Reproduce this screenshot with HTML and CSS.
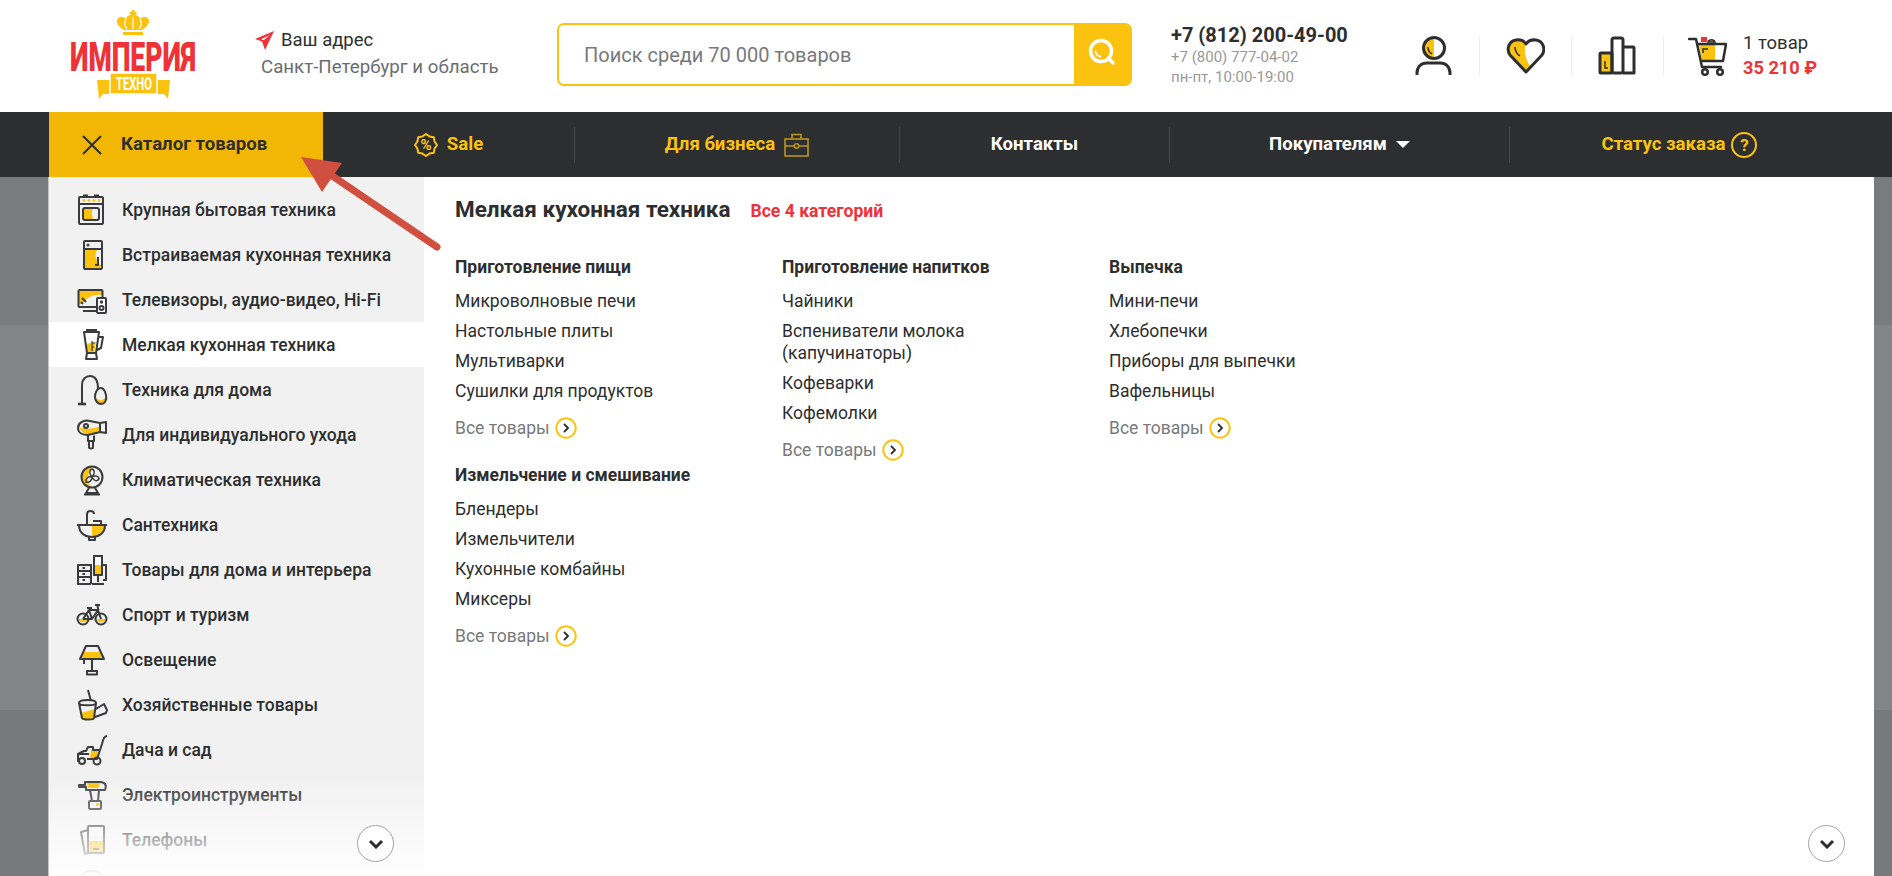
FILE: index.html
```html
<!DOCTYPE html>
<html lang="ru">
<head>
    <meta charset="UTF-8">
    <meta name="viewport" content="width=device-width, initial-scale=1.0">
    <title>Империя Техно</title>
    <link rel="stylesheet" href="styles.css">
</head>
<body>
    <header class="header">
        <a class="logo" href="#">
            <svg width="150" height="112" viewBox="0 0 150 112">
                <rect x="71.5" y="10" width="3" height="8" fill="#fbc210"/>
                <rect x="69.5" y="12" width="7" height="2.5" fill="#fbc210"/>
                <path d="M64 30C55 25 55 17 62 17C64 17 66 19 66 19C67 15 70 15 73 15C76 15 79 15 80 19C80 19 82 17 84 17C91 17 91 25 82 30Z" fill="#fbc210"/>
                <path d="M67 29C64 25 64 22 66 19M73 29V17M79 29C82 25 82 22 80 19" fill="none" stroke="#fff" stroke-width="1.2"/>
                <rect x="63" y="32" width="20" height="3" fill="#fbc210"/>
                <text transform="translate(10 71) scale(.66 1)" class="logo-name" textLength="191" lengthAdjust="spacingAndGlyphs">ИМПЕРИЯ</text>
                <path d="M37 80H50V94H43L39 99Z M110 80H97V94H104L108 99Z" fill="#fbc210"/>
                <rect x="50" y="73" width="47" height="21" fill="#fbc210" stroke="#fff" stroke-width="1.5"/>
                <text transform="translate(56 90) scale(.6 1)" class="logo-sub" textLength="60" lengthAdjust="spacingAndGlyphs">ТЕХНО</text>
            </svg>
        </a>
        <div class="address">
            <div class="address-top">
                <svg width="19" height="19" viewBox="0 0 19 19"><path d="M19 0L0 8L7 10.5L10 19Z M15 4L6 8.2L8.6 9.2Z" fill="#ee3338" fill-rule="evenodd"/></svg>
                <span>Ваш адрес</span>
            </div>
            <div class="address-city">Санкт-Петербург и область</div>
        </div>
        <form class="search">
            <input class="search-input" type="text" placeholder="Поиск среди 70 000 товаров">
            <button class="search-btn" type="button">
                <svg width="30" height="30" viewBox="0 0 30 30" fill="none" stroke="#fff" stroke-width="3.5"><circle cx="14" cy="13" r="10.500"/><path d="M22 21l4 4" stroke-linecap="round"/><path d="M8.500 13c0 3 2.500 5.500 5.500 5.500" stroke-width="1.800"/></svg>
            </button>
        </form>
        <div class="phones">
            <div class="phone-main">+7 (812) 200-49-00</div>
            <div class="phone-sub">+7 (800) 777-04-02</div>
            <div class="phone-sub">пн-пт, 10:00-19:00</div>
        </div>
        <div class="tools">
            <svg class="tool" width="39" height="40" viewBox="0 0 39 40">
                <path d="M20 1.5a10.5 10.5 0 0 0 0 21Z" fill="#fbc210"/>
                <circle cx="20" cy="12" r="10.5" fill="none" stroke="#2d2e30" stroke-width="3"/>
                <path d="M14 11c0 4 2 6 4 7" fill="none" stroke="#2d2e30" stroke-width="1.5"/>
                <path d="M3 39v-2c0-6 4-10 10-10h13c6 0 10 4 10 10v2" fill="none" stroke="#2d2e30" stroke-width="3"/>
            </svg>
            <i class="tool-sep"></i>
            <svg class="tool" width="39" height="40" viewBox="0 0 39 40">
                <path d="M20 8C18 5 14 3.500 10 4C3 5 0 13 4 19L20 36L25 31C20 25 17 15 20 8Z" fill="#fbc210"/>
                <path d="M20 36L4 19C0 13 3 5 10 4C14 3.500 18 5 20 8C22 5 26 3.500 30 4C37 5 40 13 36 19Z" fill="none" stroke="#2d2e30" stroke-width="3" stroke-linejoin="round"/>
                <path d="M9 11c0 4 2 7 5 9" fill="none" stroke="#2d2e30" stroke-width="1.500"/>
            </svg>
            <i class="tool-sep"></i>
            <svg class="tool" width="39" height="40" viewBox="0 0 39 40">
                <rect x="2" y="17" width="12" height="20" fill="#fbc210"/>
                <g fill="none" stroke="#2d2e30" stroke-width="3" stroke-linejoin="round">
                    <rect x="2" y="17" width="12" height="20" rx="1"/>
                    <rect x="14" y="2" width="11" height="35" rx="2"/>
                    <path d="M25 11H35a1 1 0 0 1 1 1V37H25"/>
                </g>
                <path d="M7 25v7h3" fill="none" stroke="#2d2e30" stroke-width="1.500"/>
            </svg>
            <i class="tool-sep"></i>
            <div class="cart">
                <svg class="tool" width="39" height="40" viewBox="0 0 39 40">
                    <rect x="13" y="1" width="6" height="5" fill="#ee3338"/>
                    <path d="M20 6c1-3 6-3 7 0z" fill="#fbc210" stroke="#2d2e30" stroke-width="1.500"/>
                    <path d="M11 8H27V25H14Z" fill="#fbc210"/>
                    <g fill="none" stroke="#2d2e30" stroke-width="2.500" stroke-linejoin="round" stroke-linecap="round">
                        <path d="M1 3H8L14 31H33"/>
                        <path d="M10 8H38L35 25H14"/>
                        <circle cx="17" cy="36" r="2.800"/>
                        <circle cx="32" cy="36" r="2.800"/>
                    </g>
                    <path d="M15 17v-4h5" fill="none" stroke="#2d2e30" stroke-width="1.500"/>
                </svg>
                <div class="cart-text">
                    <div class="cart-count">1 товар</div>
                    <div class="cart-sum">35 210 ₽</div>
                </div>
            </div>
        </div>
    </header>

    <nav class="nav">
        <a class="nav-catalog" href="#">
            <svg width="20" height="20" viewBox="0 0 20 20"><path d="M1 1L19 19M19 1L1 19" stroke="#2d2e30" stroke-width="2"/></svg>
            <span>Каталог товаров</span>
        </a>
        <a class="nav-item nav-sale accent" href="#">
            <svg width="24" height="24" viewBox="0 0 24 24">
                <path d="M12 1L15.560 3.410L19.780 4.220L20.590 8.440L23 12L20.590 15.560L19.780 19.780L15.560 20.590L12 23L8.440 20.590L4.220 19.780L3.410 15.560L1 12L3.410 8.440L4.220 4.220L8.440 3.410Z" fill="none" stroke="#fbc210" stroke-width="2" stroke-linejoin="round"/>
                <text x="12" y="17" class="sale-percent" text-anchor="middle">%</text>
            </svg>
            <span>Sale</span>
        </a>
        <i class="nav-sep"></i>
        <a class="nav-item nav-biz accent" href="#">
            <span>Для бизнеса</span>
            <svg width="25" height="24" viewBox="0 0 25 24" fill="none" stroke="#b8951d" stroke-width="1.600"><rect x="1" y="6" width="23" height="17"/><path d="M8 6V1.500H17V6M1 13H10M15 13H24"/><circle cx="12.500" cy="13" r="2.200"/></svg>
        </a>
        <i class="nav-sep"></i>
        <a class="nav-item nav-contacts" href="#"><span>Контакты</span></a>
        <i class="nav-sep"></i>
        <a class="nav-item nav-buyers" href="#">
            <span>Покупателям</span>
            <i class="caret"></i>
        </a>
        <i class="nav-sep"></i>
        <a class="nav-item nav-status accent" href="#">
            <span>Статус заказа</span>
            <i class="help">?</i>
        </a>
    </nav>

    <div class="stage">
        <aside class="side">
            <ul class="side-list">
                <li class="side-row">
                    <svg class="ic" viewBox="0 0 32 32"><path class="y" d="M7 14H17C15 18 16 23 18 26H7Z"/><rect x="3" y="3" width="24" height="27" rx="1"/><path d="M3 10H27M7 1.500H12M18 1.500H23"/><circle class="y" cx="8" cy="6.500" r="1.400"/><circle class="y" cx="13" cy="6.500" r="1.400"/><circle class="y" cx="18" cy="6.500" r="1.400"/><circle class="y" cx="23" cy="6.500" r="1.400"/><rect x="7" y="14" width="16" height="12" rx="2"/></svg>
                    <span>Крупная бытовая техника</span>
                </li>
                <li class="side-row">
                    <svg class="ic" viewBox="0 0 32 32"><path class="y" d="M8 10H22C18 14 19 22 25 26V30H8Z"/><rect x="8" y="2" width="18" height="28" rx="1"/><path d="M8 10H26M22 18V26H19"/><circle cx="12" cy="6" r=".6"/></svg>
                    <span>Встраиваемая кухонная техника</span>
                </li>
                <li class="side-row">
                    <svg class="ic" viewBox="0 0 32 32"><path class="y" d="M3 7H26V11C17 10 10 14 6 20H3Z"/><rect x="2.500" y="6" width="24" height="17" rx="1"/><path d="M7 27H21M6 14L10 18M5 18L7 20"/><rect class="w" x="21" y="14" width="9" height="15" rx="1"/><circle cx="25.500" cy="24" r="2"/><circle cx="25.500" cy="18" r=".7"/></svg>
                    <span>Телевизоры, аудио-видео, Hi-Fi</span>
                </li>
                <li class="side-row is-active">
                    <svg class="ic" viewBox="0 0 32 32"><path class="y" d="M10 15L20 13L18 24H11Z"/><path d="M8 3H23L20 24H11ZM10 1H21M22 8H27L25 19L21 21M11 24L10 30H21L20 24"/><path d="M16 12V22M16 14H19M16 18H18" stroke-width="1.200"/></svg>
                    <span>Мелкая кухонная техника</span>
                </li>
                <li class="side-row">
                    <svg class="ic" viewBox="0 0 32 32"><path class="y" d="M20 24C23 27 27 27 30 23C30 29 26 31 23 30C21 29 20 27 20 24Z"/><path d="M6 30V11C6 5 10 2 14 2C19 2 22 6 22 15"/><path d="M2 30H10" stroke-width="2.600"/><path d="M25 14C21 14 19 19 19 23C19 27 22 30 25 30C29 30 31 26 30 21C29 17 28 14 25 14Z"/></svg>
                    <span>Техника для дома</span>
                </li>
                <li class="side-row">
                    <svg class="ic" viewBox="0 0 32 32"><path class="y" d="M3 8C5 13 10 16 14 15L24 12V7C18 10 10 11 3 8Z"/><path d="M2 9C2 4 7 1.500 11 1.500L24 4V13L12 16C7 16 2 14 2 9ZM24 4L30 3V14L24 13"/><circle cx="10" cy="7" r="2"/><path d="M12 16V22H18V16.500M13 22V28C13 30 17 30 17 28V22"/></svg>
                    <span>Для индивидуального ухода</span>
                </li>
                <li class="side-row">
                    <svg class="ic" viewBox="0 0 32 32"><path class="y" d="M16 3C10 3 6 8 6 13C6 19 10 23 16 23C11 20 10 10 16 3Z"/><circle cx="16" cy="13" r="10.500"/><path d="M16 13C13 10 13 6 16 5C19 6 19 10 16 13ZM16 13C19 11 23 12 23 15C21 18 18 17 16 13ZM16 13C16 17 13 19 10 18C9 15 12 12 16 13Z" stroke-width="1.400"/><path d="M13 24L10 29H22L19 24M8 30.500H24"/></svg>
                    <span>Климатическая техника</span>
                </li>
                <li class="side-row">
                    <svg class="ic" viewBox="0 0 32 32"><path class="y" d="M16 17H28C28 23 22 27 16 27Z"/><path d="M1 16H31"/><path d="M3 16C3 24 9 28 16 28C23 28 29 24 29 16"/><path d="M13 28V31H19V28"/><path d="M11 16V5C11 1 18 1 18 5M17 12H25V16"/></svg>
                    <span>Сантехника</span>
                </li>
                <li class="side-row">
                    <svg class="ic" viewBox="0 0 32 32"><path d="M18 2H26V21H18Z" class="w"/><path class="y" d="M18 11H26V21H18Z"/><rect x="18" y="2" width="8" height="19" rx="1"/><path d="M16 11H2V30H15M2 17H15M2 23H15M15 11V30M6.500 14H9M6.500 20H9M6.500 26H9"/><path d="M22 21V28M16 30H28M26 11H30V26H27" /></svg>
                    <span>Товары для дома и интерьера</span>
                </li>
                <li class="side-row">
                    <svg class="ic" viewBox="0 0 32 32"><path class="y" d="M2 20A5.500 5.500 0 0 0 12 20ZM20 20A5.500 5.500 0 0 0 30 20Z"/><circle cx="7" cy="20" r="5.500"/><circle cx="25" cy="20" r="5.500"/><path d="M7 20L13 11H22L25 20M13 11L16 20L22 11M7 20H16M21 5L22.500 11M19 6H24M11 9H16"/></svg>
                    <span>Спорт и туризм</span>
                </li>
                <li class="side-row">
                    <svg class="ic" viewBox="0 0 32 32"><path class="y" d="M8 8H24L27 15H5Z"/><path d="M10 2H22L28 15H4ZM16 15V27M8 15V20M11 27H21V30.500H11Z"/></svg>
                    <span>Освещение</span>
                </li>
                <li class="side-row">
                    <svg class="ic" viewBox="0 0 32 32"><path class="y" d="M5 24L19 20L18 30H7Z"/><path d="M3 14C3 10 20 10 20 14L18 29C18 31 7 31 6 29ZM3 14C3 17 20 17 20 14M15 12L12 1M20 20L28 15L31 21L30 24L19 28"/></svg>
                    <span>Хозяйственные товары</span>
                </li>
                <li class="side-row">
                    <svg class="ic" viewBox="0 0 32 32"><path class="y" d="M15 16L23 15L20 25H14Z"/><path d="M31 2C28 2 27 5 26 10L21 25H11M3 27H2V20L8 17H10L12 13H17V16H23M3 20H13"/><circle cx="6" cy="27" r="3"/><circle cx="21" cy="27" r="3.500"/></svg>
                    <span>Дача и сад</span>
                </li>
                <li class="side-row">
                    <svg class="ic" viewBox="0 0 32 32"><path class="y" d="M11 3H24L23 9H12Z"/><path d="M3 6H9V3H24C29 3 31 6 29 11H10V8H3ZM14 11L16 22H22L23 11"/><rect x="13" y="22" width="12" height="8" rx="1"/><rect class="y" x="20" y="24" width="3" height="3"/></svg>
                    <span>Электроинструменты</span>
                </li>
                <li class="side-row">
                    <svg class="ic" viewBox="0 0 32 32"><path d="M12 6L5 8L9 30L12 29"/><path class="y" d="M13 17H27V28H13Z"/><rect x="12" y="2" width="16" height="27" rx="1"/><path d="M17 25H23"/></svg>
                    <span>Телефоны</span>
                </li>
                <li class="side-row">
                    <svg class="ic" viewBox="0 0 32 32"><circle cx="16" cy="16" r="14"/></svg>
                </li>
            </ul>
            <button class="more" type="button">
                <svg width="16" height="10" viewBox="0 0 16 10"><path d="M2 2L8 8L14 2" fill="none" stroke="#2d2e30" stroke-width="3"/></svg>
            </button>
        </aside>

        <main class="panel">
            <div class="panel-head">
                <h1 class="panel-title">Мелкая кухонная техника</h1>
                <a class="panel-all" href="#">Все 4 категорий</a>
            </div>
            <div class="groups">
                <div class="col">
                    <section class="group">
                        <h2 class="group-title">Приготовление пищи</h2>
                        <a class="group-link" href="#">Микроволновые печи</a>
                        <a class="group-link" href="#">Настольные плиты</a>
                        <a class="group-link" href="#">Мультиварки</a>
                        <a class="group-link" href="#">Сушилки для продуктов</a>
                        <a class="group-more" href="#">Все товары
                            <svg width="22" height="22" viewBox="0 0 22 22"><circle cx="11" cy="11" r="9.700" fill="none" stroke="#fbc210" stroke-width="2"/><path d="M9 7L13 11L9 15" fill="none" stroke="#2d2e30" stroke-width="1.800"/></svg>
                        </a>
                    </section>
                    <section class="group">
                        <h2 class="group-title">Измельчение и смешивание</h2>
                        <a class="group-link" href="#">Блендеры</a>
                        <a class="group-link" href="#">Измельчители</a>
                        <a class="group-link" href="#">Кухонные комбайны</a>
                        <a class="group-link" href="#">Миксеры</a>
                        <a class="group-more" href="#">Все товары
                            <svg width="22" height="22" viewBox="0 0 22 22"><circle cx="11" cy="11" r="9.700" fill="none" stroke="#fbc210" stroke-width="2"/><path d="M9 7L13 11L9 15" fill="none" stroke="#2d2e30" stroke-width="1.800"/></svg>
                        </a>
                    </section>
                </div>
                <div class="col">
                    <section class="group">
                        <h2 class="group-title">Приготовление напитков</h2>
                        <a class="group-link" href="#">Чайники</a>
                        <a class="group-link" href="#">Вспениватели молока<br>(капучинаторы)</a>
                        <a class="group-link" href="#">Кофеварки</a>
                        <a class="group-link" href="#">Кофемолки</a>
                        <a class="group-more" href="#">Все товары
                            <svg width="22" height="22" viewBox="0 0 22 22"><circle cx="11" cy="11" r="9.700" fill="none" stroke="#fbc210" stroke-width="2"/><path d="M9 7L13 11L9 15" fill="none" stroke="#2d2e30" stroke-width="1.800"/></svg>
                        </a>
                    </section>
                </div>
                <div class="col">
                    <section class="group">
                        <h2 class="group-title">Выпечка</h2>
                        <a class="group-link" href="#">Мини-печи</a>
                        <a class="group-link" href="#">Хлебопечки</a>
                        <a class="group-link" href="#">Приборы для выпечки</a>
                        <a class="group-link" href="#">Вафельницы</a>
                        <a class="group-more" href="#">Все товары
                            <svg width="22" height="22" viewBox="0 0 22 22"><circle cx="11" cy="11" r="9.700" fill="none" stroke="#fbc210" stroke-width="2"/><path d="M9 7L13 11L9 15" fill="none" stroke="#2d2e30" stroke-width="1.800"/></svg>
                        </a>
                    </section>
                </div>
            </div>
            <button class="more" type="button">
                <svg width="16" height="10" viewBox="0 0 16 10"><path d="M2 2L8 8L14 2" fill="none" stroke="#2d2e30" stroke-width="3"/></svg>
            </button>
        </main>
    </div>

    <!-- red pointer over the catalog button -->
    <svg class="pointer" width="160" height="110" viewBox="0 0 160 110">
        <path d="M11 7L52 13L32 42Z" fill="#d14f3f"/>
        <path d="M38 23L147 97" stroke="#d14f3f" stroke-width="7" stroke-linecap="round"/>
    </svg>
</body>
</html>
```

FILE: styles.css
```css
html, body {
    height: 876px;
    overflow: hidden;
}
body {
    margin: 0;
    position: relative;
    font-family: Roboto, "Liberation Sans", sans-serif;
    font-size: 17.5px;
    color: #2d2e30;
    background-color: #fff;
}
a {
    color: inherit;
    text-decoration: none;
}

/* top row */
.header {
    display: flex;
    align-items: center;
    height: 112px;
    padding-left: 60px;
}
.logo {
    display: block;
    height: 112px;
    width: 150px;
    margin-right: 45px;
}
.logo-name {
    font-size: 41px;
    font-weight: 900;
    fill: #ee3338;
}
.logo-sub {
    font-size: 18px;
    font-weight: 700;
    fill: #fff;
}
.address {
    width: 302px;
    margin-bottom: 5px;
}
.address-top {
    display: flex;
    align-items: center;
    gap: 7px;
    font-size: 18.5px;
    line-height: 24px;
}
.address-city {
    margin-top: 3px;
    margin-left: 6px;
    font-size: 18.7px;
    line-height: 24px;
    color: #6b6d70;
}
.search {
    display: flex;
    width: 575px;
    height: 63px;
    margin-bottom: 3px;
    box-sizing: border-box;
    border: 2px solid #fbc210;
    border-radius: 7px;
    overflow: hidden;
}
.search-input {
    flex: 1;
    min-width: 0;
    border: none;
    outline: none;
    padding: 0 25px;
    font-family: inherit;
    font-size: 20px;
}
.search-input::placeholder {
    color: #77797c;
    opacity: 1;
}
.search-btn {
    width: 56px;
    border: none;
    padding: 0 0 3px;
    background-color: #fbc210;
    display: flex;
    align-items: center;
    justify-content: center;
}
.phones {
    width: 243px;
    margin-left: 39px;
    margin-bottom: 2px;
}
.phone-main {
    font-size: 20px;
    font-weight: 700;
    line-height: 24px;
}
.phone-sub {
    font-size: 15px;
    line-height: 20px;
    color: #999;
}
.tools {
    display: flex;
    align-items: center;
    gap: 26px;
}
.tool {
    display: block;
}
.tool-sep {
    width: 1px;
    height: 40px;
    background-color: #ececec;
}
.cart {
    display: flex;
    align-items: center;
    gap: 14px;
    margin-left: -2px;
}
.cart-text {
    margin: 0 0 2px 2px;
}
.cart-count {
    font-size: 18.5px;
    line-height: 26px;
}
.cart-sum {
    font-size: 18.2px;
    font-weight: 700;
    line-height: 24px;
    color: #ee3338;
}

/* dark menu bar */
.nav {
    display: flex;
    align-items: center;
    height: 65px;
    padding-left: 49px;
    background-color: #2d2e30;
    color: #fff;
    font-size: 18.6px;
    font-weight: 700;
}
.nav span {
    margin-bottom: 2px;
}
.nav-catalog {
    display: flex;
    align-items: center;
    gap: 19px;
    width: 274px;
    height: 65px;
    box-sizing: border-box;
    padding-left: 33px;
    background-color: #f2b705;
    color: #2d2e30;
}
.nav-item {
    display: flex;
    align-items: center;
    justify-content: center;
    gap: 9px;
}
.accent {
    color: #fbc210;
}
.nav-sale { width: 251px; }
.nav-biz { width: 324px; }
.nav-contacts { width: 269px; }
.nav-buyers { width: 339px; }
.nav-status { width: 339px; gap: 6px; }
.nav-sep {
    width: 1px;
    height: 36px;
    background-color: #47484a;
}
.sale-percent {
    font-size: 15px;
    font-weight: 700;
    fill: #fbc210;
}
.caret {
    width: 0;
    height: 0;
    border-left: 7px solid transparent;
    border-right: 7px solid transparent;
    border-top: 7px solid #fff;
}
.help {
    display: block;
    width: 26px;
    height: 26px;
    box-sizing: border-box;
    border: 2px solid #fbc210;
    border-radius: 50%;
    font-style: normal;
    font-size: 17px;
    line-height: 22px;
    text-align: center;
}

/* dimmed page below the open catalog */
.stage {
    display: flex;
    height: 699px;
    padding: 0 18px 0 49px;
    background: linear-gradient(#7a7b7c 0 148px, #838485 148px 533px, #78797b 533px);
}
.side {
    position: relative;
    flex: 0 0 375px;
    overflow: hidden;
    padding-top: 10px;
    box-sizing: border-box;
    background-color: #f1f1f1;
    box-shadow: -1px 0 0 #c4c4c4;
}
.side::after {
    content: "";
    position: absolute;
    left: 0;
    right: 0;
    bottom: 0;
    height: 100px;
    background: linear-gradient(rgba(255, 255, 255, 0), rgba(255, 255, 255, .97));
}
.side-list {
    list-style: none;
    margin: 0;
    padding: 0;
}
.side-row {
    display: flex;
    align-items: center;
    gap: 14px;
    height: 45px;
    padding-left: 27px;
    font-weight: 500;
}
.is-active {
    background-color: #fff;
}
.ic {
    flex: 0 0 32px;
    width: 32px;
    height: 32px;
    fill: none;
    stroke: #3a3b3d;
    stroke-width: 2;
    stroke-linejoin: round;
}
.ic .y {
    fill: #fbc210;
    stroke: none;
}
.ic .w {
    fill: #fff;
}
.more {
    position: absolute;
    z-index: 1;
    right: 30px;
    bottom: 14px;
    width: 37px;
    height: 37px;
    padding: 0;
    border: 1px solid #a5a5a5;
    border-radius: 50%;
    background-color: #fff;
    display: flex;
    align-items: center;
    justify-content: center;
}

/* subcategories of the chosen section */
.panel {
    position: relative;
    flex: 1;
    padding: 20px 0 0 31px;
    background-color: #fff;
}
.panel .more {
    right: 29px;
}
.panel-head {
    display: flex;
    align-items: baseline;
    gap: 20px;
}
.panel-title {
    margin: 0;
    font-size: 22.5px;
    font-weight: 700;
    line-height: 24px;
}
.panel-all {
    font-size: 17.6px;
    font-weight: 700;
    color: #ee3338;
}
.groups {
    display: grid;
    grid-template-columns: repeat(3, 327px);
    margin-top: 35px;
}
.group {
    margin-bottom: 25px;
}
.group-title {
    margin: 0 0 12px;
    font-size: 17.5px;
    font-weight: 700;
    line-height: 22px;
}
.group-link {
    display: block;
    margin-bottom: 8px;
    line-height: 22px;
}
.group-more {
    display: flex;
    align-items: center;
    gap: 5px;
    margin-top: 15px;
    line-height: 22px;
    color: #77797c;
}
.pointer {
    position: absolute;
    left: 290px;
    top: 150px;
}
```
